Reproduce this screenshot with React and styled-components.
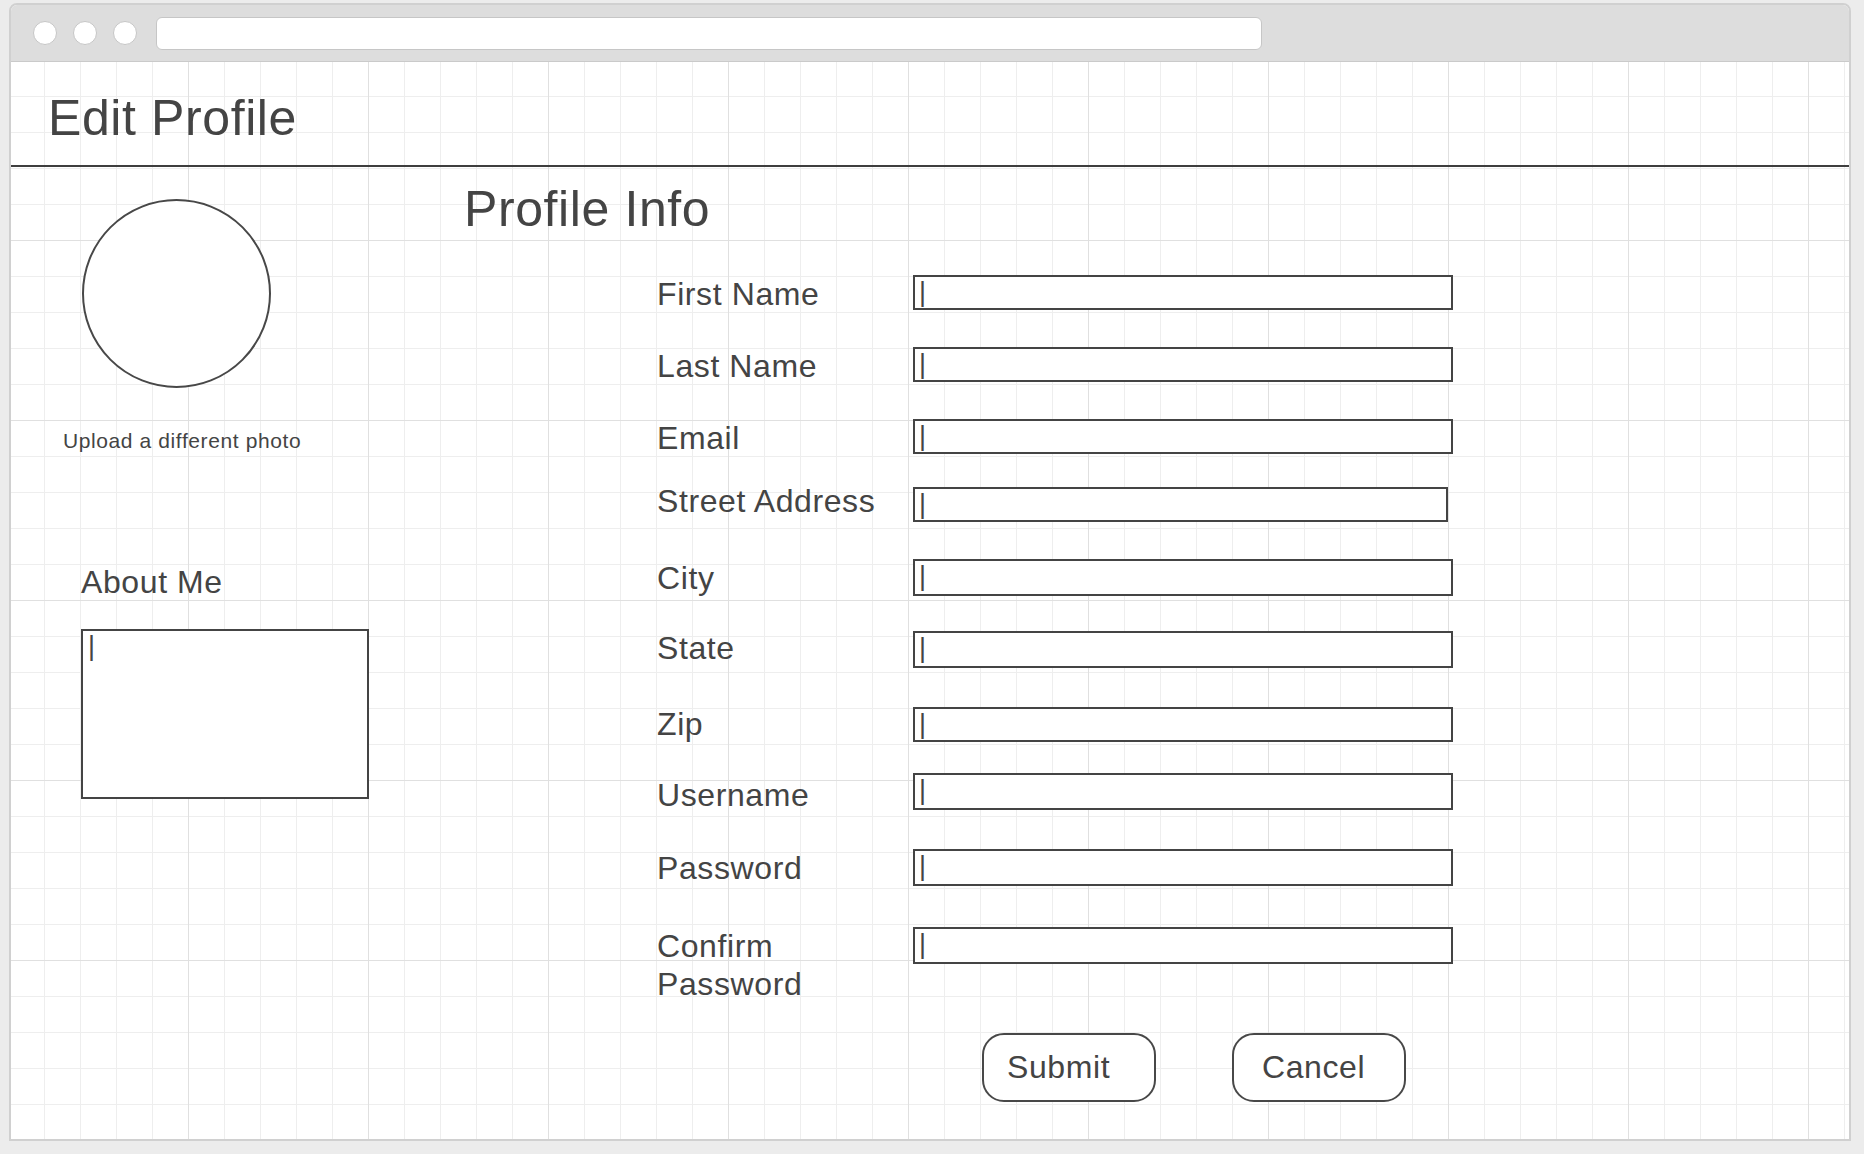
import React from 'react';
import styled, { createGlobalStyle } from 'styled-components';

const Global = createGlobalStyle`
  html, body { margin: 0; padding: 0; background: #ececec; }
  body {
    font-family: "Liberation Sans", Arial, Helvetica, sans-serif;
    color: #444;
  }
  * { box-sizing: border-box; }
`;

const Page = styled.div`
  width: 1864px;
  height: 1154px;
  padding: 3px 0 0 9px;
`;

const Window = styled.div`
  width: 1842px;
  height: 1138px;
  border: 2px solid #d0d0d0;
  border-radius: 8px 8px 0 0;
  background: #fff;
  display: flex;
  flex-direction: column;
  overflow: hidden;
`;

const TitleBar = styled.div`
  height: 57px;
  flex: none;
  background: #dddddd;
  border-bottom: 1px solid #cacaca;
  display: flex;
  align-items: center;
  gap: 16px;
  padding-left: 22px;
`;

const Dot = styled.span`
  width: 24px;
  height: 24px;
  border-radius: 50%;
  background: #fff;
  border: 1px solid #c6c6c6;
`;

const UrlBar = styled.div`
  width: 1106px;
  height: 33px;
  margin-left: 3px;
  border-radius: 6px;
  background: #fff;
  border: 1px solid #c6c6c6;
`;

const Canvas = styled.div`
  flex: 1;
  display: flex;
  flex-direction: column;
  background-color: #fff;
  background-image:
    linear-gradient(to right, #e0e0e0 1px, transparent 1px),
    linear-gradient(to bottom, #e0e0e0 1px, transparent 1px),
    linear-gradient(to right, #eeeeee 1px, transparent 1px),
    linear-gradient(to bottom, #eeeeee 1px, transparent 1px);
  background-size: 180px 180px, 180px 180px, 36px 36px, 36px 36px;
  background-position: -3px -2px;
`;

const Header = styled.header`
  height: 103px;
  flex: none;
  padding: 26px 0 0 37px;
`;

const BigTitle = styled.h1`
  margin: 0;
  font-size: 50px;
  line-height: 60px;
  font-weight: 400;
  letter-spacing: 0.6px;
  color: #444;
`;

const Divider = styled.div`
  height: 2px;
  flex: none;
  background: #3e3e3e;
`;

const Body = styled.div`
  flex: 1;
  display: flex;
`;

const Sidebar = styled.aside`
  width: 451px;
  flex: none;
  display: flex;
  flex-direction: column;
  align-items: flex-start;
  padding: 32px 0 0 52px;
`;

const Avatar = styled.div`
  width: 189px;
  height: 189px;
  margin-left: 19px;
  border-radius: 50%;
  border: 2px solid #484848;
  background: #fff;
`;

const UploadText = styled.div`
  margin-top: 41px;
  font-size: 21px;
  line-height: 24px;
  letter-spacing: 0.6px;
`;

const AboutLabel = styled.div`
  margin: 110px 0 0 18px;
  font-size: 32px;
  line-height: 38px;
  letter-spacing: 0.6px;
`;

const AboutBox = styled.div`
  width: 288px;
  height: 170px;
  margin: 28px 0 0 18px;
  border: 2px solid #444;
  background: #fff;
  padding: 2px 0 0 5px;
`;

const Caret = styled.span`
  display: block;
  font-size: 27px;
  line-height: 27px;
  color: #444;
`;

const Main = styled.main`
  flex: 1;
  display: flex;
  flex-direction: column;
  padding-top: 12px;
`;

const SectionTitle = styled.h2`
  margin: 0 0 0 2px;
  font-size: 50px;
  line-height: 60px;
  font-weight: 400;
  letter-spacing: 0.6px;
  color: #444;
`;

const Form = styled.div`
  margin: 36px 0 0 193px;
  display: flex;
  flex-direction: column;
`;

const Row = styled.div`
  display: flex;
  align-items: flex-start;
  height: ${(p) => p.$h}px;
`;

const Label = styled.div`
  width: 258px;
  flex: none;
  padding-left: 2px;
  margin-top: ${(p) => p.$offset || 0}px;
  font-size: 32px;
  line-height: 38px;
  letter-spacing: 0.6px;
`;

const Field = styled.div`
  width: ${(p) => p.$w || 540}px;
  height: ${(p) => p.$fh}px;
  margin-top: ${(p) => p.$offset || 0}px;
  border: 2px solid #444;
  background: #fff;
  padding: 2px 0 0 4px;
`;

const Actions = styled.div`
  display: flex;
  gap: 76px;
  margin: 30px 0 0 327px;
`;

const Button = styled.button`
  width: 174px;
  height: 69px;
  border: 2px solid #484848;
  border-radius: 22px;
  background: #fff;
  color: #444;
  font-family: "Liberation Sans", Arial, sans-serif;
  font-size: 32px;
  letter-spacing: 0.6px;
  padding: 0 0 0 ${(p) => p.$pl}px;
  display: flex;
  align-items: center;
  justify-content: flex-start;
`;

const rows = [
  { label: 'First Name', h: 72, fh: 35 },
  { label: 'Last Name', h: 72, fh: 35 },
  { label: 'Email', h: 63, fh: 35 },
  { label: 'Street Address', h: 77, fh: 35, io: 5, w: 535 },
  { label: 'City', h: 70, fh: 37 },
  { label: 'State', h: 76, fh: 37, io: 2 },
  { label: 'Zip', h: 68, fh: 35, io: 2 },
  { label: 'Username', h: 76, fh: 37, lo: 3 },
  { label: 'Password', h: 78, fh: 37 },
  { label: 'Confirm Password', h: 76, fh: 37 },
];

export default function App() {
  return (
    <>
      <Global />
      <Page>
        <Window>
          <TitleBar>
            <Dot />
            <Dot />
            <Dot />
            <UrlBar />
          </TitleBar>
          <Canvas>
            <Header>
              <BigTitle>Edit Profile</BigTitle>
            </Header>
            <Divider />
            <Body>
              <Sidebar>
                <Avatar />
                <UploadText>Upload a different photo</UploadText>
                <AboutLabel>About Me</AboutLabel>
                <AboutBox>
                  <Caret>|</Caret>
                </AboutBox>
              </Sidebar>
              <Main>
                <SectionTitle>Profile Info</SectionTitle>
                <Form>
                  {rows.map((r) => (
                    <Row key={r.label} $h={r.h}>
                      <Label $offset={r.lo}>{r.label}</Label>
                      <Field $w={r.w} $fh={r.fh} $offset={r.io}>
                        <Caret>|</Caret>
                      </Field>
                    </Row>
                  ))}
                  <Actions>
                    <Button $pl={23}>Submit</Button>
                    <Button $pl={28}>Cancel</Button>
                  </Actions>
                </Form>
              </Main>
            </Body>
          </Canvas>
        </Window>
      </Page>
    </>
  );
}
